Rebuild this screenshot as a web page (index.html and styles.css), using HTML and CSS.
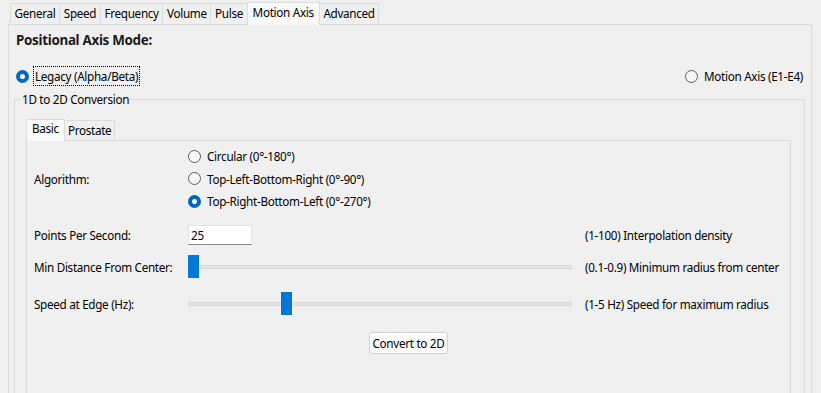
FILE: index.html
```html
<!DOCTYPE html>
<html>
<head>
<meta charset="utf-8">
<link rel="stylesheet" href="styles.css">
</head>
<body>
<div class="tabs">
  <div class="tab">General</div>
  <div class="tab">Speed</div>
  <div class="tab">Frequency</div>
  <div class="tab">Volume</div>
  <div class="tab">Pulse</div>
  <div class="tab active">Motion Axis</div>
  <div class="tab">Advanced</div>
</div>
<div class="panel">
  <div class="heading">Positional Axis Mode:</div>
  <div class="mode-row">
    <label class="radio"><span class="dot checked"></span><span class="focus">Legacy (Alpha/Beta)</span></label>
    <label class="radio"><span class="dot"></span><span>Motion Axis (E1-E4)</span></label>
  </div>
  <fieldset class="group">
    <legend>1D to 2D Conversion</legend>
    <div class="tabs inner-tabs">
      <div class="tab active">Basic</div>
      <div class="tab">Prostate</div>
    </div>
    <div class="inner-panel">
      <div class="row algo">
        <div class="label">Algorithm:</div>
        <div class="radios">
          <label class="radio"><span class="dot"></span><span>Circular (0°-180°)</span></label>
          <label class="radio"><span class="dot"></span><span>Top-Left-Bottom-Right (0°-90°)</span></label>
          <label class="radio"><span class="dot checked"></span><span>Top-Right-Bottom-Left (0°-270°)</span></label>
        </div>
        <div></div>
      </div>
      <div class="row pps">
        <div class="label">Points Per Second:</div>
        <div><div class="input">25</div></div>
        <div class="hint">(1-100) Interpolation density</div>
      </div>
      <div class="row slider-row min">
        <div class="label">Min Distance From Center:</div>
        <div class="slider"><div class="track"></div><div class="thumb" style="left:0px"></div></div>
        <div class="hint">(0.1-0.9) Minimum radius from center</div>
      </div>
      <div class="row slider-row speed">
        <div class="label">Speed at Edge (Hz):</div>
        <div class="slider"><div class="track"></div><div class="thumb" style="left:93px"></div></div>
        <div class="hint">(1-5 Hz) Speed for maximum radius</div>
      </div>
      <div class="btn-row"><button class="btn">Convert to 2D</button></div>
    </div>
  </fieldset>
</div>
</body>
</html>
```
FILE: styles.css
```css
html, body {
  margin: 0;
  padding: 0;
  background: #f0f0f0;
  overflow: hidden;
}
body {
  font-family: "Noto Sans", "Open Sans", sans-serif;
  font-size: 11.7px;
  letter-spacing: -0.3px;
  color: #000;
  width: 821px;
  height: 393px;
}
.tabs {
  display: flex;
  align-items: flex-end;
  padding-left: 10px;
  padding-top: 2px;
  height: 22px;
  position: relative;
  z-index: 1;
}
.tab {
  box-sizing: border-box;
  height: 21px;
  line-height: 19px;
  padding: 0 3.6px;
  border: 1px solid #dcdcdc;
  border-bottom: none;
  margin-right: -1px;
  background: #f0f0f0;
  white-space: nowrap;
}
.tab.active {
  height: 23px;
  line-height: 18px;
  background: #f9f9f9;
  margin-bottom: -1px;
  padding: 0 5px;
  position: relative;
}
.panel {
  box-sizing: border-box;
  margin: 0 9px 0 8px;
  border: 1px solid #dcdcdc;
  border-bottom: none;
  height: 400px;
  padding: 0;
}
.heading {
  font-size: 13.4px;
  font-weight: bold;
  color: #1a1a1a;
  height: 16px;
  line-height: 16px;
  margin-top: 7px;
  padding-left: 7px;
}
.mode-row {
  display: flex;
  justify-content: space-between;
  align-items: center;
  margin-top: 18px;
  height: 20px;
  padding: 0 8px 0 7px;
}
.radio {
  display: flex;
  align-items: center;
  gap: 6px;
  white-space: nowrap;
}
.dot {
  box-sizing: border-box;
  width: 13px;
  height: 13px;
  border-radius: 50%;
  border: 1px solid #5c5c5c;
  background: #f7f7f7;
  flex: none;
}
.dot.checked {
  border: 4px solid #0067c0;
  background: #fff;
}
.focus {
  outline: 1px dotted #000;
  outline-offset: 1px;
}
.group {
  margin: 6px 6px 0 5px;
  border: 1px solid #dcdcdc;
  padding: 0 13px 0 11px;
  height: 360px;
  box-sizing: border-box;
  min-width: 0;
}
.group legend {
  padding: 0 1px;
  margin-left: -5px;
  line-height: 14px;
}
.inner-tabs {
  padding-left: 0;
  padding-top: 12px;
  height: 22px;
}
.inner-tabs .tab {
  height: 20px;
  line-height: 19px;
  padding: 0 3px;
}
.inner-tabs .tab.active {
  height: 22px;
  line-height: 17px;
  padding: 0 5px;
}
.inner-panel {
  box-sizing: border-box;
  border: 1px solid #dcdcdc;
  border-bottom: none;
  height: 300px;
  padding: 4px 7px 0 7px;
}
.row {
  display: grid;
  grid-template-columns: 154px 397px auto;
  align-items: center;
}
.radios {
  display: flex;
  flex-direction: column;
}
.radios .radio {
  height: 22.5px;
}
.pps {
  margin-top: 12px;
  height: 20px;
}
.input {
  box-sizing: border-box;
  width: 64px;
  height: 20px;
  background: #fff;
  border: 1px solid #e2e2e2;
  border-bottom: 1px solid #8a8a8a;
  padding-left: 2px;
  line-height: 18px;
}
.hint {
  white-space: nowrap;
}
.slider-row {
  height: 24px;
}
.min {
  margin-top: 10px;
}
.speed {
  margin-top: 13px;
}
.slider {
  position: relative;
  width: 384px;
  height: 24px;
}
.track {
  position: absolute;
  left: 0;
  right: 0;
  top: 10px;
  background: #e6e6e6;
  border: 1px solid #d9d9d9;
  box-sizing: border-box;
  height: 4px;
}
.thumb {
  position: absolute;
  top: 0;
  width: 11px;
  height: 23px;
  background: #0078d7;
}
.btn-row {
  display: flex;
  justify-content: center;
  margin-top: 16px;
}
.btn {
  font-family: inherit;
  font-size: 11.7px;
  letter-spacing: -0.3px;
  color: #000;
  background: #fdfdfd;
  border: 1px solid #d0d0d0;
  border-radius: 3px;
  height: 22px;
  padding: 0 3px;
}
```
